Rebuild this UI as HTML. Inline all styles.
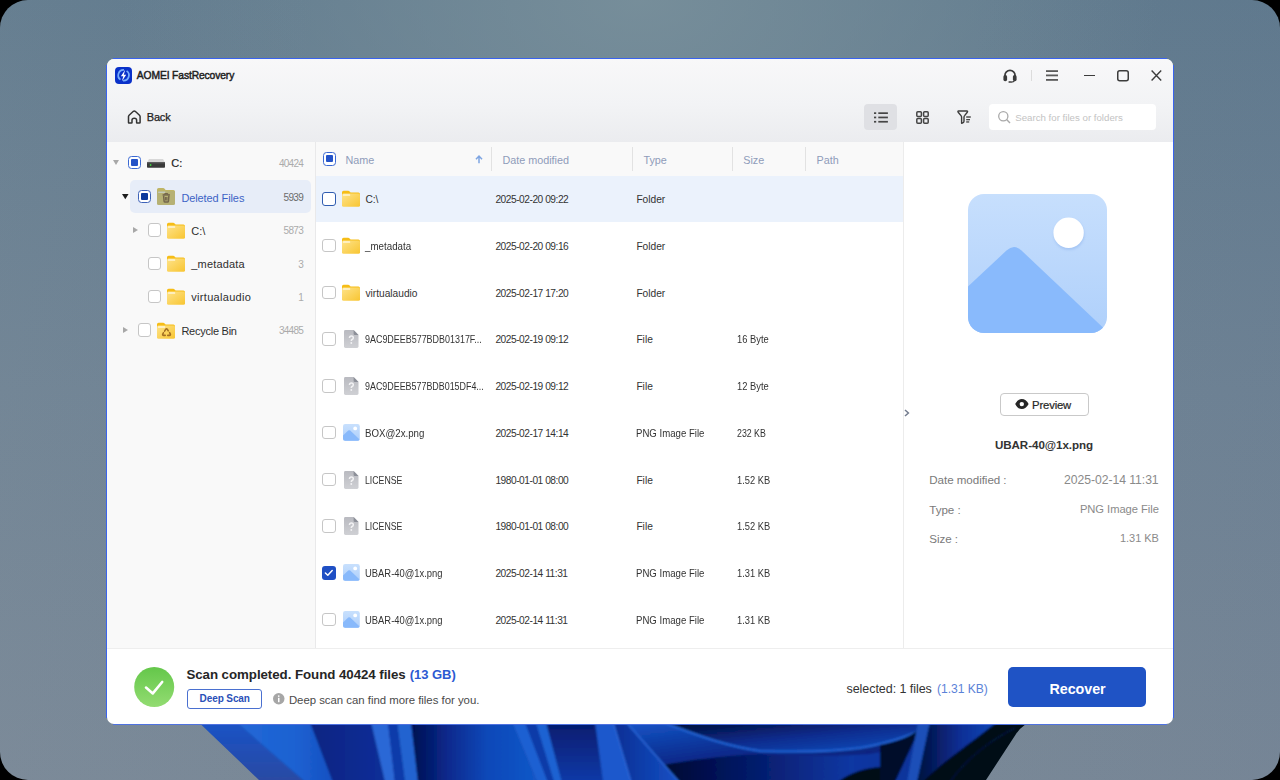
<!DOCTYPE html>
<html><head><meta charset="utf-8">
<style>
*{box-sizing:border-box;margin:0;padding:0}
html,body{width:1280px;height:780px;overflow:hidden;background:#000}
body{font-family:"Liberation Sans",sans-serif;position:relative;color:#333}
.a{position:absolute}
svg.a{overflow:visible}
.t{position:absolute;white-space:nowrap;line-height:1}
</style></head><body>
<div class="a" style="left:0;top:0;width:1280px;height:780px;border-radius:28px;overflow:hidden;background:linear-gradient(180deg,#617b8e 0%,#6f8394 50%,#798897 100%)">
<div class="a" style="left:0;top:0;width:1280px;height:780px;background:radial-gradient(ellipse 520px 330px at 640px 0px,rgba(122,145,156,.85) 0%,rgba(122,145,156,0) 100%)"></div>
<div class="a" style="left:0;top:0;width:1280px;height:780px;background:linear-gradient(90deg,rgba(150,160,170,.10) 0%,rgba(0,0,0,0) 25%,rgba(0,0,0,0) 75%,rgba(80,100,140,.08) 100%)"></div>
<svg class="a" style="left:0;top:0" width="1280" height="780" viewBox="0 0 1280 780">
<defs>
<clipPath id="wc"><path d="M200.5,724 L1026,724 Q1020,728 1016,734 L986,780 L259,780 Z"/></clipPath>
<filter id="wbl" x="-5%" y="-50%" width="110%" height="200%"><feGaussianBlur stdDeviation="1.1"/></filter>
<linearGradient id="gL1" x1="0" y1="0" x2="0" y2="1"><stop offset="0" stop-color="#1a53c6"/><stop offset="1" stop-color="#2a4aa2"/></linearGradient>
<linearGradient id="gL2" x1="0" y1="0" x2="1" y2="0"><stop offset="0" stop-color="#2268d6"/><stop offset=".6" stop-color="#1d62d2"/><stop offset="1" stop-color="#1550c2"/></linearGradient>
<linearGradient id="gN1" x1="0" y1="0" x2="1" y2="0"><stop offset="0" stop-color="#072482"/><stop offset="1" stop-color="#0a2e98"/></linearGradient>
<linearGradient id="gD1" x1="0" y1="0" x2="1" y2="0"><stop offset="0" stop-color="#040f50"/><stop offset=".3" stop-color="#082a8e"/><stop offset=".6" stop-color="#0d48b8"/><stop offset="1" stop-color="#1257c8"/></linearGradient>
<linearGradient id="gN2" x1="0" y1="0" x2="0" y2="1"><stop offset="0" stop-color="#061c6e"/><stop offset="1" stop-color="#0c3aa8"/></linearGradient>
<linearGradient id="gP1" x1="0" y1="0" x2="1" y2="0"><stop offset="0" stop-color="#0a2e94"/><stop offset="1" stop-color="#1550c4"/></linearGradient>
<linearGradient id="gH" x1="0" y1="0" x2="1" y2="1"><stop offset="0" stop-color="#1656c8"/><stop offset=".5" stop-color="#0a2c8e"/><stop offset="1" stop-color="#061c70"/></linearGradient>
<linearGradient id="gUp" x1="0" y1="0" x2="1" y2="1"><stop offset="0" stop-color="#020a2e"/><stop offset=".5" stop-color="#0a2c8e"/><stop offset="1" stop-color="#1752c4"/></linearGradient>
<linearGradient id="gLow" x1="0" y1="0" x2="1" y2="0"><stop offset="0" stop-color="#020818"/><stop offset=".25" stop-color="#041257"/><stop offset=".6" stop-color="#0b37a2"/><stop offset="1" stop-color="#0a2e90"/></linearGradient>
<linearGradient id="gR" x1="0" y1="0" x2="1" y2="0"><stop offset="0" stop-color="#040f3c"/><stop offset=".55" stop-color="#0a2f96"/><stop offset="1" stop-color="#1148b8"/></linearGradient>
</defs>
<g clip-path="url(#wc)"><g filter="url(#wbl)">
<rect x="190" y="720" width="850" height="64" fill="#061e74"/>
<polygon points="190,722 236,722 305,782 250,782" fill="url(#gL1)"/>
<polygon points="236,722 310,722 333,782 305,782" fill="url(#gL2)"/>
<polygon points="310,722 371,722 385,782 333,782" fill="url(#gN1)"/>
<polygon points="371,722 388,722 395,782 385,782" fill="#2a68d6"/>
<polygon points="388,722 397,722 405,782 395,782" fill="#0c3aaa"/>
<polygon points="397,722 411,722 418,782 405,782" fill="#2464d0"/>
<polygon points="411,722 512,722 537,782 418,782" fill="url(#gD1)"/>
<polygon points="512,722 525,722 548,782 537,782" fill="#1d60d2"/>
<polygon points="525,722 535.5,722 554,782 548,782" fill="#0b3aa8"/>
<polygon points="535.5,722 546,722 562,782 554,782" fill="#1f62d2"/>
<polygon points="546,722 595,722 603,782 562,782" fill="url(#gN2)"/>
<polygon points="595,722 613,722 631,782 603,782" fill="#1a58cc"/>
<polygon points="613,722 626,722 679,782 631,782" fill="url(#gP1)"/>
<path d="M613,722 L631,782" stroke="#2a66d6" stroke-width="1.5" fill="none"/>
<!-- dark area right of petal line, below/above ribbon -->
<path d="M626,722 L1000,722 L1000,782 L679,782 Z" fill="url(#gLow)"/>
<!-- upper region above ribbon -->
<path d="M660,722 L935,722 C925,733 900,742 850,749 C810,753 780,751 760,751 C720,745 690,732 660,722 Z" fill="url(#gUp)"/>
<!-- horn / ribbon -->
<path d="M626,722 L662,722 C690,732 720,745 760,751 C790,752 830,752 860,748 C895,742 915,734 935,722 L940,722 C925,740 905,748 870,754 C830,757 790,756 760,754 C720,756 690,760 663,765 Z" fill="url(#gH)"/>
<path d="M662,722 C690,732 720,745 760,751 C790,752 830,752 860,748 C895,742 915,734 935,722" stroke="#2364d4" stroke-width="2" fill="none"/>
<path d="M626,722 L679,782" stroke="#2a66d6" stroke-width="1.6" fill="none"/>
<!-- crescent at bottom -->
<path d="M838,782 C850,772 870,766 888,767 C893,770 895,776 895,782 Z" fill="#020818"/>
<!-- right section -->
<path d="M880,745 C900,741 912,736 920,728 L895,782 L880,782 Z" fill="#030b2c"/>
<path d="M918,722 L930,722 L917,782 L907,782 Z" fill="#1a4fb8"/>
<path d="M930,722 L997,722 C975,740 945,760 922,782 L917,782 Z" fill="url(#gR)"/>
<path d="M997,722 L1030,722 L990,782 L922,782 C945,760 975,740 997,722 Z" fill="#020818"/>
<path d="M950,782 C965,760 990,740 1015,728" stroke="#0b2050" stroke-width="1" fill="none"/>
</g></g>
</svg>
</div>
<div class="a" style="left:113px;top:58px;width:1054px;height:1px;background:#3a63ee"></div>
<div class="a" style="left:113px;top:724px;width:1054px;height:1px;background:#4f72e0"></div>
<div class="a" style="left:106px;top:65px;width:1px;height:653px;background:#3a63ee"></div>
<div class="a" style="left:1173px;top:65px;width:1px;height:653px;background:#3a63ee"></div>
<div class="a" style="left:107px;top:59px;width:1066px;height:665px;border-radius:7px;background:#fff;overflow:hidden">
<div class="a" style="left:0;top:0;width:1066px;height:83px;background:linear-gradient(180deg,#f8f8f9 0%,#f2f3f5 55%,#ebecef 100%)"></div>
<div class="a" style="left:0;top:83px;width:208px;height:506px;background:#f9f9f9"></div>
<div class="a" style="left:208px;top:83px;width:1px;height:506px;background:#e9e9ea"></div>
<div class="a" style="left:209px;top:83px;width:587px;height:34px;background:#f9f9f9"></div>
<div class="a" style="left:796px;top:83px;width:1px;height:506px;background:#ececec"></div>
<div class="a" style="left:0;top:589px;width:1066px;height:1px;background:#eeeeee"></div>
</div>
<svg class="a" style="left:115px;top:67px" width="17" height="17" viewBox="0 0 17 17">
<rect x="0" y="0" width="17" height="17" rx="4" fill="#0a31c9"/>
<path d="M11.6,3.9 A5.35,5.35 0 0 1 8.05,13.63" stroke="#77aefc" stroke-width="1.75" fill="none"/>
<path d="M5.4,12.6 A5.35,5.35 0 0 1 8.95,2.97" stroke="#77aefc" stroke-width="1.75" fill="none"/>
<path d="M10.2,2.7 L5.9,9.3 H8.3 L6.9,14.3 L11.2,7.8 H8.8 Z" fill="#fff"/>
</svg>
<div class="t" style="left:136.80px;top:70.68px;font-size:10.3px;color:#1e1e1e;font-weight:normal;letter-spacing:-0.12px;-webkit-text-stroke:0.45px #1e1e1e;">AOMEI FastRecovery</div>
<svg class="a" style="left:1003px;top:68.6px" width="14" height="14" viewBox="0 0 14 14">
<path d="M1.9,8.4 V6.4 A5.1,5.1 0 0 1 12.1,6.4 V8.4" stroke="#3a3a3a" stroke-width="1.7" fill="none"/>
<rect x="0.4" y="6.1" width="3.7" height="6.1" rx="1.7" fill="#3a3a3a"/>
<rect x="9.9" y="6.1" width="3.7" height="6.1" rx="1.7" fill="#3a3a3a"/>
<path d="M11.6,11.4 Q10.8,13.1 8,13.1" stroke="#3a3a3a" stroke-width="1.1" fill="none"/>
<rect x="5.4" y="12.3" width="3" height="1.5" rx=".75" fill="#3a3a3a"/>
</svg>
<div class="a" style="left:1030.5px;top:70px;width:1.2px;height:10.5px;background:#dcdcdc"></div>
<svg class="a" style="left:1046px;top:70px" width="12" height="11" viewBox="0 0 12 11">
<rect x="0" y="0.2" width="12" height="1.8" fill="#5a5a5a"/>
<rect x="0" y="4.5" width="12" height="1.8" fill="#5a5a5a"/>
<rect x="0" y="9" width="12" height="1.8" fill="#5a5a5a"/>
</svg>
<div class="a" style="left:1084px;top:74.6px;width:11.2px;height:1.5px;background:#3c3c3c"></div>
<svg class="a" style="left:1117px;top:70px" width="12" height="11.5" viewBox="0 0 12 11.5"><rect x=".75" y=".75" width="10.5" height="10" rx="2" stroke="#3c3c3c" stroke-width="1.5" fill="none"/></svg>
<svg class="a" style="left:1151px;top:70px" width="11" height="11" viewBox="0 0 11 11"><path d="M.6,.6 L10.2,10.4 M10.2,.6 L.6,10.4" stroke="#3c3c3c" stroke-width="1.4" fill="none"/></svg>
<svg class="a" style="left:127px;top:110px" width="15" height="14" viewBox="0 0 15 14">
<path d="M1.5,12.4 V6.6 Q1.5,5.8 2.1,5.2 L6.4,1.3 Q7.3,.6 8.2,1.3 L12.5,5.2 Q13.1,5.8 13.1,6.6 V12.4 Q13.1,13.1 12.4,13.1 H10 Q9.6,13.1 9.6,12.6 V10 Q9.6,8.2 7.3,8.2 Q5,8.2 5,10 V12.6 Q5,13.1 4.5,13.1 H2.2 Q1.5,13.1 1.5,12.4 Z" stroke="#333" stroke-width="1.5" fill="none" stroke-linejoin="round"/>
</svg>
<div class="t" style="left:146.80px;top:112.29px;font-size:11px;color:#222;font-weight:normal;letter-spacing:-0.2px;-webkit-text-stroke:0.25px #222;">Back</div>
<div class="a" style="left:864px;top:104px;width:33px;height:26px;background:#dfe0e4;border-radius:4px"></div>
<svg class="a" style="left:874px;top:112px" width="14" height="11" viewBox="0 0 14 11">
<rect x="0" y=".3" width="2.2" height="1.7" fill="#454545"/><rect x="4.3" y=".3" width="9.6" height="1.7" fill="#454545"/>
<rect x="0" y="4.6" width="2.2" height="1.7" fill="#454545"/><rect x="4.3" y="4.6" width="9.6" height="1.7" fill="#454545"/>
<rect x="0" y="8.9" width="2.2" height="1.7" fill="#454545"/><rect x="4.3" y="8.9" width="9.6" height="1.7" fill="#454545"/>
</svg>
<svg class="a" style="left:916px;top:111px" width="13" height="13" viewBox="0 0 13 13">
<rect x=".8" y=".8" width="4.6" height="4.6" rx="1" stroke="#454545" stroke-width="1.5" fill="none"/>
<rect x="7.6" y=".8" width="4.6" height="4.6" rx="1" stroke="#454545" stroke-width="1.5" fill="none"/>
<rect x=".8" y="7.6" width="4.6" height="4.6" rx="1" stroke="#454545" stroke-width="1.5" fill="none"/>
<rect x="7.6" y="7.6" width="4.6" height="4.6" rx="1" stroke="#454545" stroke-width="1.5" fill="none"/>
</svg>
<svg class="a" style="left:957px;top:110px" width="15" height="14" viewBox="0 0 15 14">
<path d="M1.5,1 H9.8 Q11,1 10.3,2.2 L7.6,5.6 Q7,6.3 7,7.3 V11.2 Q7,12.5 5.4,13 L4.6,13.2 V7.3 Q4.6,6.3 4,5.6 L1.2,2.2 Q.5,1 1.5,1 Z" stroke="#3c3c3c" stroke-width="1.4" fill="none" stroke-linejoin="round"/>
<rect x="9.2" y="6.3" width="4.6" height="1.4" fill="#454545"/>
<rect x="9.2" y="9" width="3.8" height="1.3" fill="#454545"/>
<rect x="9.2" y="11.3" width="3" height="1.3" fill="#454545"/>
</svg>
<div class="a" style="left:989px;top:104px;width:167px;height:26px;background:#fff;border-radius:4px"></div>
<svg class="a" style="left:998px;top:111px" width="13" height="13" viewBox="0 0 13 13"><circle cx="5.3" cy="5.3" r="4.6" stroke="#a9a9a9" stroke-width="1.3" fill="none"/><path d="M8.6,8.6 L12,12" stroke="#a9a9a9" stroke-width="1.4"/></svg>
<div class="t" style="left:1015.20px;top:112.99px;font-size:9.7px;color:#c3c3c3;font-weight:normal;letter-spacing:0px;">Search for files or folders</div>
<svg class="a" style="left:112.5px;top:160.4px" width="6" height="5" viewBox="0 0 6 5"><path d="M0,0 H6 L3.0,5 Z" fill="#a8a8a8"/></svg>
<div class="a" style="left:127.5px;top:156px;width:13.4px;height:13.4px;border:1.3px solid #3c6ad3;border-radius:3.5px;background:#fff"></div>
<div class="a" style="left:130.7px;top:159.2px;width:7px;height:7px;background:#2453c8;border-radius:1px"></div>
<svg class="a" style="left:147px;top:159px" width="18" height="9" viewBox="0 0 18 9">
<path d="M2,0 H16 L18,3.4 H0 Z" fill="#d8d8d8"/>
<rect x="0" y="3.2" width="18" height="5.6" rx=".8" fill="#3a3a3a"/>
<rect x="0" y="3.2" width="18" height="1.2" fill="#5a5a5a"/>
<circle cx="3.6" cy="6" r=".9" fill="#3fd23f"/>
</svg>
<div class="t" style="left:171.30px;top:158.49px;font-size:11px;color:#222;font-weight:normal;letter-spacing:0px;-webkit-text-stroke:0.2px #222;">C:</div>
<div class="t" style="right:976.80px;top:159.13px;font-size:10px;color:#ababab;font-weight:normal;letter-spacing:-0.7px;">40424</div>
<div class="a" style="left:130px;top:180px;width:180.5px;height:33px;background:#e7edf8;border-radius:5px"></div>
<svg class="a" style="left:122px;top:193.8px" width="6.6" height="5.2" viewBox="0 0 6.6 5.2"><path d="M0,0 H6.6 L3.3,5.2 Z" fill="#1e1e1e"/></svg>
<div class="a" style="left:137.8px;top:189.8px;width:13.4px;height:13.4px;border:1.3px solid #3d62b8;border-radius:3.5px;background:#fff"></div>
<div class="a" style="left:141.0px;top:193.0px;width:7px;height:7px;background:#0d3a9c;border-radius:1px"></div>
<svg class="a" style="left:157px;top:188px" width="18" height="17" viewBox="0 0 18 17">
<path d="M0,1.6 Q0,0 1.6,0 H6.2 Q7,0 7.6,.7 L8.6,2 H16.4 Q18,2 18,3.6 V6 H0 Z" fill="#bfb566"/>
<rect x="0" y="2.9" width="18" height="14" rx="1.5" fill="#b6b174"/>
<rect x="1.2" y="3.6" width="7" height="1.3" fill="#c9d4d6" opacity=".8"/>
<path d="M5.6,6.9 H12.9" stroke="#74664c" stroke-width="1.5" fill="none"/>
<path d="M7.8,6.8 V6 Q7.8,5.5 8.3,5.5 H10.2 Q10.7,5.5 10.7,6 V6.8" stroke="#74664c" stroke-width="1.1" fill="none"/>
<path d="M6.6,7.6 L7.1,13.2 Q7.2,14.1 8,14.1 H10.5 Q11.3,14.1 11.4,13.2 L11.9,7.6" stroke="#74664c" stroke-width="1.5" fill="none"/>
<path d="M8.6,9 V12.6 M9.9,9 V12.6" stroke="#74664c" stroke-width="1.1"/>
</svg>
<div class="t" style="left:181.40px;top:192.59px;font-size:11px;color:#3d63c6;font-weight:normal;letter-spacing:-0.1px;">Deleted Files</div>
<div class="t" style="right:976.80px;top:193.03px;font-size:10px;color:#6b6b6b;font-weight:normal;letter-spacing:-0.65px;">5939</div>
<svg class="a" style="left:133px;top:227px" width="5" height="6" viewBox="0 0 5 6"><path d="M0,0 V6 L5,3.0 Z" fill="#a8a8a8"/></svg>
<div class="a" style="left:147.8px;top:223.2px;width:13.5px;height:13.5px;border:1.3px solid #c6c6c6;border-radius:3px;background:#fff"></div>
<svg class="a" style="left:167px;top:221.6px" width="18" height="17" viewBox="0 0 18 17">
<defs><linearGradient id="fg167221" x1="0" y1="0" x2="1" y2="1"><stop offset="0" stop-color="#fee38a"/><stop offset="1" stop-color="#f8c531"/></linearGradient></defs>
<path d="M0,2.3 Q0,.7 1.6,.7 H6.2 Q7,.7 7.6,1.4 L8.6,2.6 H16.4 Q18,2.6 18,4.2 V6.5 H0 Z" fill="#f6bd17"/>
<rect x="0" y="3.4" width="18" height="13.4" rx="1.5" fill="url(#fg167221)"/>
<rect x="1" y="4.3" width="7.2" height="1.5" rx=".6" fill="#fff8e6" opacity=".85"/>
</svg>
<div class="t" style="left:191.30px;top:225.69px;font-size:11px;color:#2e2e2e;font-weight:normal;letter-spacing:0px;">C:\</div>
<div class="t" style="right:976.80px;top:226.34px;font-size:10px;color:#ababab;font-weight:normal;letter-spacing:-0.65px;">5873</div>
<div class="a" style="left:147.8px;top:256.5px;width:13.5px;height:13.5px;border:1.3px solid #c6c6c6;border-radius:3px;background:#fff"></div>
<svg class="a" style="left:167px;top:254.9px" width="18" height="17" viewBox="0 0 18 17">
<defs><linearGradient id="fg167254" x1="0" y1="0" x2="1" y2="1"><stop offset="0" stop-color="#fee38a"/><stop offset="1" stop-color="#f8c531"/></linearGradient></defs>
<path d="M0,2.3 Q0,.7 1.6,.7 H6.2 Q7,.7 7.6,1.4 L8.6,2.6 H16.4 Q18,2.6 18,4.2 V6.5 H0 Z" fill="#f6bd17"/>
<rect x="0" y="3.4" width="18" height="13.4" rx="1.5" fill="url(#fg167254)"/>
<rect x="1" y="4.3" width="7.2" height="1.5" rx=".6" fill="#fff8e6" opacity=".85"/>
</svg>
<div class="t" style="left:191.30px;top:258.99px;font-size:11px;color:#2e2e2e;font-weight:normal;letter-spacing:0.16px;">_metadata</div>
<div class="t" style="right:976.80px;top:259.64px;font-size:10px;color:#ababab;font-weight:normal;letter-spacing:-0.65px;">3</div>
<div class="a" style="left:147.8px;top:289.9px;width:13.5px;height:13.5px;border:1.3px solid #c6c6c6;border-radius:3px;background:#fff"></div>
<svg class="a" style="left:167px;top:288.3px" width="18" height="17" viewBox="0 0 18 17">
<defs><linearGradient id="fg167288" x1="0" y1="0" x2="1" y2="1"><stop offset="0" stop-color="#fee38a"/><stop offset="1" stop-color="#f8c531"/></linearGradient></defs>
<path d="M0,2.3 Q0,.7 1.6,.7 H6.2 Q7,.7 7.6,1.4 L8.6,2.6 H16.4 Q18,2.6 18,4.2 V6.5 H0 Z" fill="#f6bd17"/>
<rect x="0" y="3.4" width="18" height="13.4" rx="1.5" fill="url(#fg167288)"/>
<rect x="1" y="4.3" width="7.2" height="1.5" rx=".6" fill="#fff8e6" opacity=".85"/>
</svg>
<div class="t" style="left:191.30px;top:292.39px;font-size:11px;color:#2e2e2e;font-weight:normal;letter-spacing:0.3px;">virtualaudio</div>
<div class="t" style="right:976.80px;top:293.04px;font-size:10px;color:#ababab;font-weight:normal;letter-spacing:-0.65px;">1</div>
<svg class="a" style="left:123px;top:327px" width="5" height="6" viewBox="0 0 5 6"><path d="M0,0 V6 L5,3.0 Z" fill="#a8a8a8"/></svg>
<div class="a" style="left:137.8px;top:323.2px;width:13.5px;height:13.5px;border:1.3px solid #c6c6c6;border-radius:3px;background:#fff"></div>
<svg class="a" style="left:157px;top:321.5px" width="18" height="17" viewBox="0 0 18 17">
<defs><linearGradient id="fg157321" x1="0" y1="0" x2="1" y2="1"><stop offset="0" stop-color="#fee38a"/><stop offset="1" stop-color="#f8c531"/></linearGradient></defs>
<path d="M0,2.3 Q0,.7 1.6,.7 H6.2 Q7,.7 7.6,1.4 L8.6,2.6 H16.4 Q18,2.6 18,4.2 V6.5 H0 Z" fill="#f6bd17"/>
<rect x="0" y="3.4" width="18" height="13.4" rx="1.5" fill="url(#fg157321)"/>
<rect x="1" y="4.3" width="7.2" height="1.5" rx=".6" fill="#fff8e6" opacity=".85"/>
</svg>
<svg class="a" style="left:161.6px;top:327.8px" width="9" height="8.4" viewBox="0 0 9 8.4">
<path d="M2.6,3.2 L3.8,1.2 Q4.5,.2 5.2,1.2 L6.2,2.8" stroke="#a36f22" stroke-width="1.6" fill="none" stroke-linecap="round"/>
<path d="M7.6,4.6 L8.3,6 Q8.8,7.4 7.3,7.4 H5.8" stroke="#a36f22" stroke-width="1.6" fill="none" stroke-linecap="round"/>
<path d="M3.2,7.4 H1.8 Q.2,7.4 .8,6 L1.4,4.8" stroke="#a36f22" stroke-width="1.6" fill="none" stroke-linecap="round"/>
</svg>
<div class="t" style="left:181.40px;top:325.69px;font-size:11px;color:#2e2e2e;font-weight:normal;letter-spacing:-0.25px;">Recycle Bin</div>
<div class="t" style="right:976.80px;top:326.34px;font-size:10px;color:#ababab;font-weight:normal;letter-spacing:-0.7px;">34485</div>
<div class="a" style="left:322.8px;top:152.2px;width:13.4px;height:13.4px;border:1.3px solid #3c6ad3;border-radius:3.5px;background:#fff"></div>
<div class="a" style="left:326.0px;top:155.39999999999998px;width:7px;height:7px;background:#2453c8;border-radius:1px"></div>
<div class="t" style="left:345.40px;top:154.96px;font-size:10.8px;color:#8f9cba;font-weight:normal;letter-spacing:0px;">Name</div>
<svg class="a" style="left:475px;top:155px" width="8" height="8.5" viewBox="0 0 8 8.5"><path d="M4,8.2 V1.2 M1,4.2 L4,1 L7,4.2" stroke="#7ea5e2" stroke-width="1.5" fill="none"/></svg>
<div class="a" style="left:491px;top:146.8px;width:1px;height:24.2px;background:#e2e2e2"></div>
<div class="a" style="left:632px;top:146.8px;width:1px;height:24.2px;background:#e2e2e2"></div>
<div class="a" style="left:732px;top:146.8px;width:1px;height:24.2px;background:#e2e2e2"></div>
<div class="a" style="left:805px;top:146.8px;width:1px;height:24.2px;background:#e2e2e2"></div>
<div class="t" style="left:502.40px;top:154.96px;font-size:10.8px;color:#8f9cba;font-weight:normal;letter-spacing:0px;">Date modified</div>
<div class="t" style="left:643.40px;top:154.96px;font-size:10.8px;color:#8f9cba;font-weight:normal;letter-spacing:0px;">Type</div>
<div class="t" style="left:743.20px;top:154.96px;font-size:10.8px;color:#8f9cba;font-weight:normal;letter-spacing:0px;">Size</div>
<div class="t" style="left:816.60px;top:154.96px;font-size:10.8px;color:#8f9cba;font-weight:normal;letter-spacing:0px;">Path</div>
<div class="a" style="left:316px;top:176px;width:587px;height:46px;background:#ebf2fc"></div>
<div class="a" style="left:322.2px;top:192.2px;width:13.5px;height:13.5px;border:1.3px solid #2f5cb0;border-radius:3px;background:#fff"></div>
<svg class="a" style="left:342.2px;top:190.4px" width="18" height="17" viewBox="0 0 18 17">
<defs><linearGradient id="fg342390" x1="0" y1="0" x2="1" y2="1"><stop offset="0" stop-color="#fee38a"/><stop offset="1" stop-color="#f8c531"/></linearGradient></defs>
<path d="M0,2.3 Q0,.7 1.6,.7 H6.2 Q7,.7 7.6,1.4 L8.6,2.6 H16.4 Q18,2.6 18,4.2 V6.5 H0 Z" fill="#f6bd17"/>
<rect x="0" y="3.4" width="18" height="13.4" rx="1.5" fill="url(#fg342390)"/>
<rect x="1" y="4.3" width="7.2" height="1.5" rx=".6" fill="#fff8e6" opacity=".85"/>
</svg>
<div class="t" style="left:365.40px;top:195.17px;font-size:10.2px;color:#333;font-weight:normal;letter-spacing:0px;transform:scaleX(1.0000);transform-origin:0 0;">C:\</div>
<div class="t" style="left:495.40px;top:195.17px;font-size:10.2px;color:#333;font-weight:normal;letter-spacing:-0.47px;">2025-02-20 09:22</div>
<div class="t" style="left:636.40px;top:195.17px;font-size:10.2px;color:#333;font-weight:normal;letter-spacing:0px;transform:scaleX(1.0000);transform-origin:0 0;">Folder</div>
<div class="a" style="left:322.2px;top:238.95px;width:13.5px;height:13.5px;border:1.3px solid #c6c6c6;border-radius:3px;background:#fff"></div>
<svg class="a" style="left:342.2px;top:237.15px" width="18" height="17" viewBox="0 0 18 17">
<defs><linearGradient id="fg342437" x1="0" y1="0" x2="1" y2="1"><stop offset="0" stop-color="#fee38a"/><stop offset="1" stop-color="#f8c531"/></linearGradient></defs>
<path d="M0,2.3 Q0,.7 1.6,.7 H6.2 Q7,.7 7.6,1.4 L8.6,2.6 H16.4 Q18,2.6 18,4.2 V6.5 H0 Z" fill="#f6bd17"/>
<rect x="0" y="3.4" width="18" height="13.4" rx="1.5" fill="url(#fg342437)"/>
<rect x="1" y="4.3" width="7.2" height="1.5" rx=".6" fill="#fff8e6" opacity=".85"/>
</svg>
<div class="t" style="left:365.40px;top:241.92px;font-size:10.2px;color:#333;font-weight:normal;letter-spacing:0px;transform:scaleX(0.9583);transform-origin:0 0;">_metadata</div>
<div class="t" style="left:495.40px;top:241.92px;font-size:10.2px;color:#333;font-weight:normal;letter-spacing:-0.47px;">2025-02-20 09:16</div>
<div class="t" style="left:636.40px;top:241.92px;font-size:10.2px;color:#333;font-weight:normal;letter-spacing:0px;transform:scaleX(1.0000);transform-origin:0 0;">Folder</div>
<div class="a" style="left:322.2px;top:285.7px;width:13.5px;height:13.5px;border:1.3px solid #c6c6c6;border-radius:3px;background:#fff"></div>
<svg class="a" style="left:342.2px;top:283.9px" width="18" height="17" viewBox="0 0 18 17">
<defs><linearGradient id="fg342483" x1="0" y1="0" x2="1" y2="1"><stop offset="0" stop-color="#fee38a"/><stop offset="1" stop-color="#f8c531"/></linearGradient></defs>
<path d="M0,2.3 Q0,.7 1.6,.7 H6.2 Q7,.7 7.6,1.4 L8.6,2.6 H16.4 Q18,2.6 18,4.2 V6.5 H0 Z" fill="#f6bd17"/>
<rect x="0" y="3.4" width="18" height="13.4" rx="1.5" fill="url(#fg342483)"/>
<rect x="1" y="4.3" width="7.2" height="1.5" rx=".6" fill="#fff8e6" opacity=".85"/>
</svg>
<div class="t" style="left:365.40px;top:288.67px;font-size:10.2px;color:#333;font-weight:normal;letter-spacing:0px;transform:scaleX(1.0000);transform-origin:0 0;">virtualaudio</div>
<div class="t" style="left:495.40px;top:288.67px;font-size:10.2px;color:#333;font-weight:normal;letter-spacing:-0.47px;">2025-02-17 17:20</div>
<div class="t" style="left:636.40px;top:288.67px;font-size:10.2px;color:#333;font-weight:normal;letter-spacing:0px;transform:scaleX(1.0000);transform-origin:0 0;">Folder</div>
<div class="a" style="left:322.2px;top:332.45px;width:13.5px;height:13.5px;border:1.3px solid #c6c6c6;border-radius:3px;background:#fff"></div>
<svg class="a" style="left:344px;top:330.25px" width="15" height="18" viewBox="0 0 15 18">
<defs><linearGradient id="dg3" x1="0" y1="0" x2="0" y2="1"><stop offset="0" stop-color="#b9bac0"/><stop offset="1" stop-color="#cfd0d4"/></linearGradient></defs>
<path d="M1.4,0 H9.6 L14.5,5 V16.6 Q14.5,18 13.1,18 H1.4 Q0,18 0,16.6 V1.4 Q0,0 1.4,0 Z" fill="url(#dg3)"/>
<path d="M9.6,0 L14.5,5 H10.8 Q9.6,5 9.6,3.8 Z" fill="#8c8f98"/>
<path d="M5.5,7.9 Q5.5,5.9 7.4,5.9 Q9.3,5.9 9.3,7.7 Q9.3,8.9 8.1,9.5 Q7.3,9.9 7.3,11" stroke="#f2f2f4" stroke-width="1.5" fill="none"/>
<circle cx="7.3" cy="13" r=".95" fill="#f2f2f4"/>
</svg>
<div class="t" style="left:365.40px;top:335.42px;font-size:10.2px;color:#333;font-weight:normal;letter-spacing:0px;transform:scaleX(0.8774);transform-origin:0 0;">9AC9DEEB577BDB01317F...</div>
<div class="t" style="left:495.40px;top:335.42px;font-size:10.2px;color:#333;font-weight:normal;letter-spacing:-0.47px;">2025-02-19 09:12</div>
<div class="t" style="left:636.40px;top:335.42px;font-size:10.2px;color:#333;font-weight:normal;letter-spacing:0px;transform:scaleX(1.0000);transform-origin:0 0;">File</div>
<div class="t" style="left:737.00px;top:335.42px;font-size:10.2px;color:#333;font-weight:normal;letter-spacing:0px;transform:scaleX(0.9191);transform-origin:0 0;">16 Byte</div>
<div class="a" style="left:322.2px;top:379.2px;width:13.5px;height:13.5px;border:1.3px solid #c6c6c6;border-radius:3px;background:#fff"></div>
<svg class="a" style="left:344px;top:377.0px" width="15" height="18" viewBox="0 0 15 18">
<defs><linearGradient id="dg4" x1="0" y1="0" x2="0" y2="1"><stop offset="0" stop-color="#b9bac0"/><stop offset="1" stop-color="#cfd0d4"/></linearGradient></defs>
<path d="M1.4,0 H9.6 L14.5,5 V16.6 Q14.5,18 13.1,18 H1.4 Q0,18 0,16.6 V1.4 Q0,0 1.4,0 Z" fill="url(#dg4)"/>
<path d="M9.6,0 L14.5,5 H10.8 Q9.6,5 9.6,3.8 Z" fill="#8c8f98"/>
<path d="M5.5,7.9 Q5.5,5.9 7.4,5.9 Q9.3,5.9 9.3,7.7 Q9.3,8.9 8.1,9.5 Q7.3,9.9 7.3,11" stroke="#f2f2f4" stroke-width="1.5" fill="none"/>
<circle cx="7.3" cy="13" r=".95" fill="#f2f2f4"/>
</svg>
<div class="t" style="left:365.40px;top:382.17px;font-size:10.2px;color:#333;font-weight:normal;letter-spacing:0px;transform:scaleX(0.8741);transform-origin:0 0;">9AC9DEEB577BDB015DF4...</div>
<div class="t" style="left:495.40px;top:382.17px;font-size:10.2px;color:#333;font-weight:normal;letter-spacing:-0.47px;">2025-02-19 09:12</div>
<div class="t" style="left:636.40px;top:382.17px;font-size:10.2px;color:#333;font-weight:normal;letter-spacing:0px;transform:scaleX(1.0000);transform-origin:0 0;">File</div>
<div class="t" style="left:737.00px;top:382.17px;font-size:10.2px;color:#333;font-weight:normal;letter-spacing:0px;transform:scaleX(0.9191);transform-origin:0 0;">12 Byte</div>
<div class="a" style="left:322.2px;top:425.95px;width:13.5px;height:13.5px;border:1.3px solid #c6c6c6;border-radius:3px;background:#fff"></div>
<svg class="a" style="left:343px;top:423.75px" width="17" height="17" viewBox="0 0 17 17">
<defs><linearGradient id="ig5" x1="0" y1="0" x2="0" y2="1"><stop offset="0" stop-color="#c8e0fd"/><stop offset="1" stop-color="#aecffb"/></linearGradient></defs>
<rect x="0" y="0" width="16.8" height="16.8" rx="2.2" fill="url(#ig5)"/>
<path d="M0,11.4 L5.2,6.6 Q6.2,5.8 7.2,6.6 L16.6,15.6 Q16.2,16.8 14.6,16.8 H2.2 Q0,16.8 0,14.6 Z" fill="#88b9fb"/>
<circle cx="12.2" cy="4.4" r="1.9" fill="#fff"/>
</svg>
<div class="t" style="left:365.40px;top:428.92px;font-size:10.2px;color:#333;font-weight:normal;letter-spacing:0px;transform:scaleX(0.9508);transform-origin:0 0;">BOX@2x.png</div>
<div class="t" style="left:495.40px;top:428.92px;font-size:10.2px;color:#333;font-weight:normal;letter-spacing:-0.47px;">2025-02-17 14:14</div>
<div class="t" style="left:636.40px;top:428.92px;font-size:10.2px;color:#333;font-weight:normal;letter-spacing:0px;transform:scaleX(0.9437);transform-origin:0 0;">PNG Image File</div>
<div class="t" style="left:737.00px;top:428.92px;font-size:10.2px;color:#333;font-weight:normal;letter-spacing:0px;transform:scaleX(0.8636);transform-origin:0 0;">232 KB</div>
<div class="a" style="left:322.2px;top:472.7px;width:13.5px;height:13.5px;border:1.3px solid #c6c6c6;border-radius:3px;background:#fff"></div>
<svg class="a" style="left:344px;top:470.5px" width="15" height="18" viewBox="0 0 15 18">
<defs><linearGradient id="dg6" x1="0" y1="0" x2="0" y2="1"><stop offset="0" stop-color="#b9bac0"/><stop offset="1" stop-color="#cfd0d4"/></linearGradient></defs>
<path d="M1.4,0 H9.6 L14.5,5 V16.6 Q14.5,18 13.1,18 H1.4 Q0,18 0,16.6 V1.4 Q0,0 1.4,0 Z" fill="url(#dg6)"/>
<path d="M9.6,0 L14.5,5 H10.8 Q9.6,5 9.6,3.8 Z" fill="#8c8f98"/>
<path d="M5.5,7.9 Q5.5,5.9 7.4,5.9 Q9.3,5.9 9.3,7.7 Q9.3,8.9 8.1,9.5 Q7.3,9.9 7.3,11" stroke="#f2f2f4" stroke-width="1.5" fill="none"/>
<circle cx="7.3" cy="13" r=".95" fill="#f2f2f4"/>
</svg>
<div class="t" style="left:365.40px;top:475.67px;font-size:10.2px;color:#333;font-weight:normal;letter-spacing:0px;transform:scaleX(0.8571);transform-origin:0 0;">LICENSE</div>
<div class="t" style="left:495.40px;top:475.67px;font-size:10.2px;color:#333;font-weight:normal;letter-spacing:-0.47px;">1980-01-01 08:00</div>
<div class="t" style="left:636.40px;top:475.67px;font-size:10.2px;color:#333;font-weight:normal;letter-spacing:0px;transform:scaleX(1.0000);transform-origin:0 0;">File</div>
<div class="t" style="left:737.00px;top:475.67px;font-size:10.2px;color:#333;font-weight:normal;letter-spacing:0px;transform:scaleX(0.9143);transform-origin:0 0;">1.52 KB</div>
<div class="a" style="left:322.2px;top:519.45px;width:13.5px;height:13.5px;border:1.3px solid #c6c6c6;border-radius:3px;background:#fff"></div>
<svg class="a" style="left:344px;top:517.25px" width="15" height="18" viewBox="0 0 15 18">
<defs><linearGradient id="dg7" x1="0" y1="0" x2="0" y2="1"><stop offset="0" stop-color="#b9bac0"/><stop offset="1" stop-color="#cfd0d4"/></linearGradient></defs>
<path d="M1.4,0 H9.6 L14.5,5 V16.6 Q14.5,18 13.1,18 H1.4 Q0,18 0,16.6 V1.4 Q0,0 1.4,0 Z" fill="url(#dg7)"/>
<path d="M9.6,0 L14.5,5 H10.8 Q9.6,5 9.6,3.8 Z" fill="#8c8f98"/>
<path d="M5.5,7.9 Q5.5,5.9 7.4,5.9 Q9.3,5.9 9.3,7.7 Q9.3,8.9 8.1,9.5 Q7.3,9.9 7.3,11" stroke="#f2f2f4" stroke-width="1.5" fill="none"/>
<circle cx="7.3" cy="13" r=".95" fill="#f2f2f4"/>
</svg>
<div class="t" style="left:365.40px;top:522.42px;font-size:10.2px;color:#333;font-weight:normal;letter-spacing:0px;transform:scaleX(0.8571);transform-origin:0 0;">LICENSE</div>
<div class="t" style="left:495.40px;top:522.42px;font-size:10.2px;color:#333;font-weight:normal;letter-spacing:-0.47px;">1980-01-01 08:00</div>
<div class="t" style="left:636.40px;top:522.42px;font-size:10.2px;color:#333;font-weight:normal;letter-spacing:0px;transform:scaleX(1.0000);transform-origin:0 0;">File</div>
<div class="t" style="left:737.00px;top:522.42px;font-size:10.2px;color:#333;font-weight:normal;letter-spacing:0px;transform:scaleX(0.9143);transform-origin:0 0;">1.52 KB</div>
<div class="a" style="left:322.2px;top:566.2px;width:13.5px;height:13.5px;background:#1f4fc4;border-radius:3px"></div>
<svg class="a" style="left:322.2px;top:566.2px" width="13.5" height="13.5" viewBox="0 0 13.5 13.5"><path d="M3.4,7 L5.8,9.2 L10.2,4.6" stroke="#fff" stroke-width="1.5" fill="none" stroke-linecap="round" stroke-linejoin="round"/></svg>
<svg class="a" style="left:343px;top:564.0px" width="17" height="17" viewBox="0 0 17 17">
<defs><linearGradient id="ig8" x1="0" y1="0" x2="0" y2="1"><stop offset="0" stop-color="#c8e0fd"/><stop offset="1" stop-color="#aecffb"/></linearGradient></defs>
<rect x="0" y="0" width="16.8" height="16.8" rx="2.2" fill="url(#ig8)"/>
<path d="M0,11.4 L5.2,6.6 Q6.2,5.8 7.2,6.6 L16.6,15.6 Q16.2,16.8 14.6,16.8 H2.2 Q0,16.8 0,14.6 Z" fill="#88b9fb"/>
<circle cx="12.2" cy="4.4" r="1.9" fill="#fff"/>
</svg>
<div class="t" style="left:365.40px;top:569.17px;font-size:10.2px;color:#333;font-weight:normal;letter-spacing:0px;transform:scaleX(0.9238);transform-origin:0 0;">UBAR-40@1x.png</div>
<div class="t" style="left:495.40px;top:569.17px;font-size:10.2px;color:#333;font-weight:normal;letter-spacing:-0.47px;">2025-02-14 11:31</div>
<div class="t" style="left:636.40px;top:569.17px;font-size:10.2px;color:#333;font-weight:normal;letter-spacing:0px;transform:scaleX(0.9437);transform-origin:0 0;">PNG Image File</div>
<div class="t" style="left:737.00px;top:569.17px;font-size:10.2px;color:#333;font-weight:normal;letter-spacing:0px;transform:scaleX(0.9143);transform-origin:0 0;">1.31 KB</div>
<div class="a" style="left:322.2px;top:612.95px;width:13.5px;height:13.5px;border:1.3px solid #c6c6c6;border-radius:3px;background:#fff"></div>
<svg class="a" style="left:343px;top:610.75px" width="17" height="17" viewBox="0 0 17 17">
<defs><linearGradient id="ig9" x1="0" y1="0" x2="0" y2="1"><stop offset="0" stop-color="#c8e0fd"/><stop offset="1" stop-color="#aecffb"/></linearGradient></defs>
<rect x="0" y="0" width="16.8" height="16.8" rx="2.2" fill="url(#ig9)"/>
<path d="M0,11.4 L5.2,6.6 Q6.2,5.8 7.2,6.6 L16.6,15.6 Q16.2,16.8 14.6,16.8 H2.2 Q0,16.8 0,14.6 Z" fill="#88b9fb"/>
<circle cx="12.2" cy="4.4" r="1.9" fill="#fff"/>
</svg>
<div class="t" style="left:365.40px;top:615.92px;font-size:10.2px;color:#333;font-weight:normal;letter-spacing:0px;transform:scaleX(0.9238);transform-origin:0 0;">UBAR-40@1x.png</div>
<div class="t" style="left:495.40px;top:615.92px;font-size:10.2px;color:#333;font-weight:normal;letter-spacing:-0.47px;">2025-02-14 11:31</div>
<div class="t" style="left:636.40px;top:615.92px;font-size:10.2px;color:#333;font-weight:normal;letter-spacing:0px;transform:scaleX(0.9437);transform-origin:0 0;">PNG Image File</div>
<div class="t" style="left:737.00px;top:615.92px;font-size:10.2px;color:#333;font-weight:normal;letter-spacing:0px;transform:scaleX(0.9143);transform-origin:0 0;">1.31 KB</div>
<svg class="a" style="left:968px;top:194px" width="139" height="139" viewBox="0 0 139 139">
<defs>
<linearGradient id="pg" x1="0" y1="0" x2="0" y2="1"><stop offset="0" stop-color="#c7dffd"/><stop offset="1" stop-color="#afd0fb"/></linearGradient>
<filter id="sh" x="-50%" y="-50%" width="200%" height="200%"><feGaussianBlur stdDeviation="1.2"/></filter>
<clipPath id="pc"><rect x="0" y="0" width="139" height="139" rx="16"/></clipPath>
</defs>
<g clip-path="url(#pc)">
<rect x="0" y="0" width="139" height="139" fill="url(#pg)"/>
<path d="M-2,94.5 L38.5,56.5 Q46,49.5 53.5,56.5 L136,134.5 L136,141 H-2 Z" fill="#89bafc"/>
<circle cx="101" cy="40.5" r="15.4" fill="#8fb4ec" opacity=".5" filter="url(#sh)"/>
<circle cx="100.6" cy="38.7" r="15.2" fill="#fff"/>
</g>
</svg>
<svg class="a" style="left:904.4px;top:408.6px" width="6" height="8" viewBox="0 0 6 8"><path d="M1,1 L4.4,4 L1,7" stroke="#737c8e" stroke-width="1.5" fill="none"/></svg>
<div class="a" style="left:1000.3px;top:392.7px;width:88.4px;height:23.2px;border:1px solid #c9c9c9;border-radius:4px;background:#fff"></div>
<svg class="a" style="left:1015px;top:399px" width="14" height="10.5" viewBox="0 0 14 10.5">
<path d="M.2,5.1 Q2.6,.1 6.8,.1 Q11,.1 13.6,5.1 Q11,10.1 6.8,10.1 Q2.6,10.1 .2,5.1 Z" fill="#262626"/>
<circle cx="6.8" cy="5.1" r="2.2" fill="#fff"/>
</svg>
<div class="t" style="left:1032.00px;top:399.93px;font-size:11.3px;color:#262626;font-weight:normal;letter-spacing:-0.15px;-webkit-text-stroke:0.2px #262626;">Preview</div>
<div class="t" style="left:744.00px;width:600px;text-align:center;top:439.38px;font-size:11.6px;color:#333;font-weight:bold;letter-spacing:-0.05px;">UBAR-40@1x.png</div>
<div class="t" style="left:929.30px;top:474.48px;font-size:11.6px;color:#7a7a7a;font-weight:normal;letter-spacing:-0.05px;">Date modified :</div>
<div class="t" style="right:121.40px;top:473.97px;font-size:12.2px;color:#8a8a8a;font-weight:normal;letter-spacing:-0.05px;">2025-02-14 11:31</div>
<div class="t" style="left:929.30px;top:503.98px;font-size:11.6px;color:#7a7a7a;font-weight:normal;letter-spacing:-0.05px;">Type :</div>
<div class="t" style="right:121.20px;top:504.32px;font-size:11.2px;color:#8a8a8a;font-weight:normal;letter-spacing:-0.05px;">PNG Image File</div>
<div class="t" style="left:929.30px;top:532.78px;font-size:11.6px;color:#7a7a7a;font-weight:normal;letter-spacing:-0.05px;">Size :</div>
<div class="t" style="right:121.20px;top:533.29px;font-size:11.0px;color:#8a8a8a;font-weight:normal;letter-spacing:-0.05px;">1.31 KB</div>
<svg class="a" style="left:133.5px;top:667px" width="40.5" height="40" viewBox="0 0 40.5 40">
<defs><linearGradient id="gg" x1="0" y1="0" x2="0" y2="1"><stop offset="0" stop-color="#64c74a"/><stop offset="1" stop-color="#93dc72"/></linearGradient></defs>
<circle cx="20.2" cy="20" r="20" fill="url(#gg)"/>
<path d="M12,20.6 L18.8,26.4 L28.2,15" stroke="#fff" stroke-width="2.6" fill="none" stroke-linecap="round" stroke-linejoin="round"/>
</svg>
<div class="t" style="left:186.40px;top:667.54px;font-size:13.3px;color:#262626;font-weight:bold;letter-spacing:-0.05px;">Scan completed. Found 40424 files</div>
<div class="t" style="left:409.80px;top:667.80px;font-size:13px;color:#2c5ad2;font-weight:bold;letter-spacing:-0.05px;">(13 GB)</div>
<div class="a" style="left:187.2px;top:688.8px;width:74.4px;height:19.8px;border:1.2px solid #4a70d0;border-radius:3px;background:#fff"></div>
<div class="t" style="left:199.60px;top:694.43px;font-size:10px;color:#2a50b8;font-weight:bold;letter-spacing:-0.1px;">Deep Scan</div>
<svg class="a" style="left:273px;top:693.4px" width="11.5" height="11.5" viewBox="0 0 11.5 11.5"><circle cx="5.75" cy="5.75" r="5.75" fill="#a6a6a6"/><rect x="5" y="4.8" width="1.5" height="4.4" fill="#fff"/><circle cx="5.75" cy="3.1" r=".85" fill="#fff"/></svg>
<div class="t" style="left:288.90px;top:694.85px;font-size:11.4px;color:#4a4a4a;font-weight:normal;letter-spacing:-0.02px;">Deep scan can find more files for you.</div>
<div class="t" style="left:846.50px;top:682.72px;font-size:12.5px;color:#333;font-weight:normal;letter-spacing:-0.05px;">selected: 1 files</div>
<div class="t" style="left:937.10px;top:683.06px;font-size:12.1px;color:#5b82d8;font-weight:normal;letter-spacing:-0.05px;">(1.31 KB)</div>
<div class="a" style="left:1008.4px;top:667.2px;width:137.5px;height:39.6px;background:#1f53c5;border-radius:5px"></div>
<div class="t" style="left:1049.50px;top:681.80px;font-size:14.3px;color:#fff;font-weight:bold;letter-spacing:-0.05px;">Recover</div>
</body></html>
